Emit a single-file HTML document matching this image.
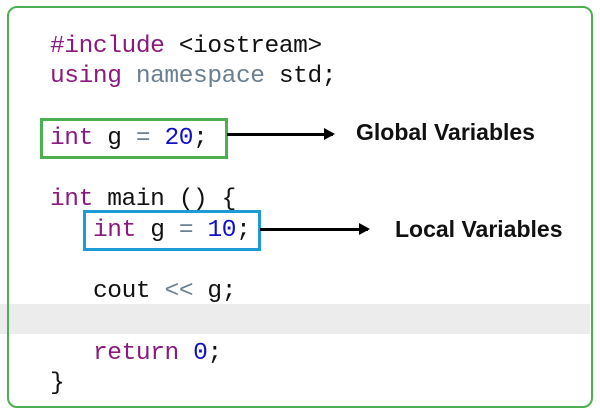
<!DOCTYPE html>
<html><head><style>
body{margin:0;width:600px;height:415px;background:#fff;position:relative;overflow:hidden;font-family:"Liberation Mono",monospace}
.frame{position:absolute;left:7px;top:6px;width:582px;height:398px;border:2px solid #4caf50;border-radius:10px}
.band{position:absolute;left:0;top:304px;width:590px;height:30px;background:#ececec}
.l{position:absolute;font-size:24.5px;line-height:30px;white-space:pre;color:#111}
.k{color:#8b1a7e}.n{color:#1010c8}.g{color:#6a7f90}
.box{position:absolute;border:3px solid}
.lab{position:absolute;font-family:"Liberation Sans",sans-serif;font-weight:bold;font-size:23px;line-height:26px;color:#111}
.ar{position:absolute;height:3px;background:#000}
.ar:after{content:"";position:absolute;right:-2px;top:-5px;border-left:11px solid #000;border-top:6.5px solid transparent;border-bottom:6.5px solid transparent}
</style></head><body>
<div class="band"></div>
<div class="frame"></div>
<div class="l" style="left:50px;top:32px;letter-spacing:-0.4px"><span class="k">#include</span> &lt;iostream&gt;</div>
<div class="l" style="left:50px;top:62px;letter-spacing:-0.4px"><span class="k">using</span> <span class="g">namespace</span> std;</div>
<div class="l" style="left:50px;top:124px;letter-spacing:-0.4px"><span class="k">int</span> g <span class="g">=</span> <span class="n">20</span>;</div>
<div class="l" style="left:50px;top:185px;letter-spacing:-0.4px"><span class="k">int</span> main () {</div>
<div class="l" style="left:93px;top:216px;letter-spacing:-0.4px"><span class="k">int</span> g <span class="g">=</span> <span class="n">10</span>;</div>
<div class="l" style="left:93px;top:277px;letter-spacing:-0.4px">cout <span class="g">&lt;&lt;</span> g;</div>
<div class="l" style="left:93px;top:339px;letter-spacing:-0.4px"><span class="k">return</span> <span class="n">0</span>;</div>
<div class="l" style="left:50px;top:369px">}</div>
<div class="box" style="left:40px;top:118px;width:182px;height:35px;border-color:#4caf50"></div>
<div class="box" style="left:83px;top:210px;width:172px;height:35px;border-color:#1e9ad6"></div>
<div class="ar" style="left:227px;top:133px;width:106px"></div>
<div class="ar" style="left:260px;top:228px;width:108px"></div>
<div class="lab" style="left:356px;top:119px">Global Variables</div>
<div class="lab" style="left:395px;top:216px">Local Variables</div>
</body></html>
